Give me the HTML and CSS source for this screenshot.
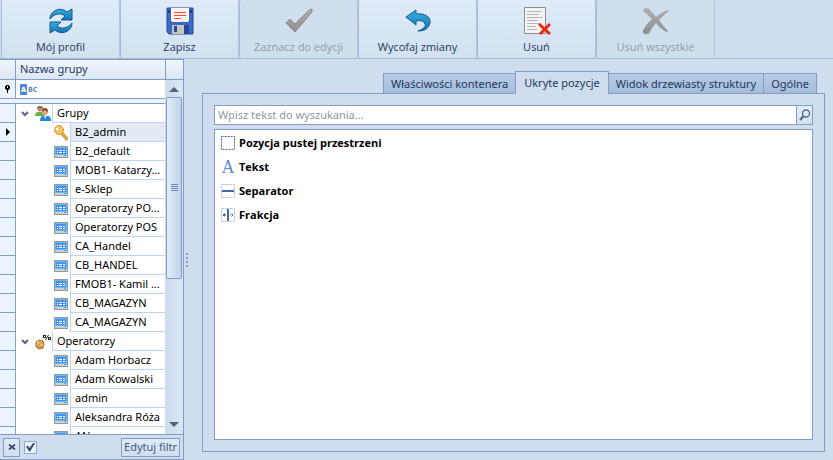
FILE: index.html
```html
<!DOCTYPE html>
<html lang="pl">
<head>
  <meta charset="UTF-8" />
  <meta name="viewport" content="width=device-width, initial-scale=1.0"/>
  <title>Grupy i operatorzy</title>
  <link rel="stylesheet" href="styles.css">
</head>
<body>
  <svg class="defs" width="0" height="0" aria-hidden="true">
    <defs>
      <linearGradient id="blue" x1="0" y1="0" x2="0" y2="1">
        <stop offset="0" stop-color="#35b4e0"/>
        <stop offset="1" stop-color="#1470b0"/>
      </linearGradient>
      <linearGradient id="gray" x1="0" y1="0" x2="0" y2="1">
        <stop offset="0" stop-color="#b0b0b0"/>
        <stop offset="1" stop-color="#8e8e8e"/>
      </linearGradient>
    </defs>
    <symbol id="card" viewBox="0 0 14 12">
      <rect x="0" y="0" width="14" height="12" fill="#969696"/>
      <rect x="1" y="1" width="12" height="8" fill="#5cc0f8"/>
      <rect x="2" y="2" width="10" height="6" fill="#4c8ff0"/>
      <path d="M3 4.500h1M5 4.500h3M9 4.500h2M3 6.500h1M5 6.500h3M9 6.500h2" stroke="#fff"/>
      <rect x="1" y="9" width="12" height="2" fill="#cfcfcf"/>
      <rect x="10" y="9" width="2" height="1" fill="#2fb4e0"/>
    </symbol>
    <symbol id="arrow" viewBox="0 0 8 6">
      <path d="M1 1l3 3 3-3" fill="none" stroke="#5a6685" stroke-width="2"/>
    </symbol>
  </svg>

  <nav class="toolbar">
    <button class="tool">
      <svg width="28" height="28" viewBox="0 0 28 28">
        <path d="M3 12C3 4 13-1 20 5l5-3v11H14l4-4C13 5 7 7 3 12z" fill="url(#blue)" stroke="#14598c"/>
        <path d="M25 16c0 8-10 13-17 7l-5 3V15h11l-4 4c5 4 11 2 15-3z" fill="url(#blue)" stroke="#14598c"/>
      </svg>
      <span>Mój profil</span>
    </button>
    <button class="tool">
      <svg width="28" height="28" viewBox="0 0 28 28">
        <path d="M1 1h26v26H3l-2-2z" fill="#3a69c4" stroke="#27479c"/>
        <path d="M5 1h18v12q0 2-2 2H7q-2 0-2-2z" fill="#fff5f0"/>
        <path d="M8 5.500h12M8 8.500h12M8 11.500h7" stroke="#ff4b2e"/>
        <path d="M2 3h2v3H2zM24 3h2v3h-2z" fill="#19378c"/>
        <path d="M6 18h12v9H6z" fill="#c4c4b8"/>
        <path d="M18 18h5v9h-5z" fill="#27479c"/>
        <path d="M8 19h3v6H8z" fill="#27479c"/>
      </svg>
      <span>Zapisz</span>
    </button>
    <button class="tool" disabled>
      <svg width="28" height="28" viewBox="0 0 28 28">
        <path d="M1 16l4-4 5 5L24 3l3-1v3L10 25z" fill="url(#gray)" stroke="#8a8a8a"/>
      </svg>
      <span>Zaznacz do edycji</span>
    </button>
    <button class="tool">
      <svg width="28" height="28" viewBox="0 0 28 28">
        <path d="M2 10l10-7v4c9-1 15 3 14 9-1 5-5 8-12 8 6-2 8-5 7-7-1-3-4-4-9-3v4z" fill="url(#blue)" stroke="#14598c"/>
      </svg>
      <span>Wycofaj zmiany</span>
    </button>
    <button class="tool">
      <svg width="28" height="28" viewBox="0 0 28 28">
        <path d="M1.500 .5h21v26h-21z" fill="#f4f4f4" stroke="#8c8c8c"/>
        <path d="M4 4.500h15M4 7.500h12M4 10.500h15M4 13.500h11M4 16.500h13M4 19.500h9M4 22.500h10" stroke="#b5b5b5"/>
        <path d="M16 17l11 10M27 17l-10 10" stroke="#ee2b12" stroke-width="3"/>
      </svg>
      <span>Usuń</span>
    </button>
    <button class="tool" disabled>
      <svg width="28" height="28" viewBox="0 0 28 28">
        <path d="M1 4q0-3 3-3 3 0 4 2l6 7q5-5 12-7l1 1q-5 4-10 9 4 6 9 11l-1 1q-7-3-11-9-4 4-6 9-2 3-5 2-3-1-2-4 3-6 9-11z" fill="url(#gray)"/>
      </svg>
      <span>Usuń wszystkie</span>
    </button>
  </nav>

  <div class="layout">
    <aside class="groups">
      <div class="row head">
        <span class="gutter"></span>
        <span class="title">Nazwa grupy</span>
      </div>
      <div class="body">
        <div class="grid">
          <div class="row filter">
            <span class="gutter">
              <svg width="5" height="8" viewBox="0 0 5 8"><path d="M0 1h5v3H0zM1 0h3v5H1zM2 5h1v3H2z"/><path d="M2 1h1v2H2z" fill="#fff"/></svg>
            </span>
            <label class="abc" for="filter"><b>A</b>BC</label>
            <input type="text" id="filter" aria-label="Nazwa grupy" />
          </div>
          <ul class="tree">
            <li class="row group">
              <span class="gutter"></span>
              <svg class="toggle"><use href="#arrow"/></svg>
              <svg class="icon" viewBox="0 0 16 16">
                <circle cx="5" cy="3" r="2.500" fill="#c98a5e"/>
                <path d="M2 3q0-3 3-3t3 3l-3-2z" fill="#6e4a2c"/>
                <path d="M0 10q0-4 3-4h4q3 0 3 4z" fill="#69b34c"/>
                <circle cx="10" cy="6" r="3" fill="#dfa679"/>
                <path d="M7 6q0-4 3-4t3 4l-3-2z" fill="#6e4a2c"/>
                <path d="M5 15q0-5 3-5h5q3 0 3 5z" fill="#2388d1"/>
                <path d="M9 10h2l-1 3z" fill="#fff"/>
              </svg>
              <span class="name">Grupy</span>
            </li>
            <li class="row selected">
              <span class="gutter"><svg width="4" height="8" viewBox="0 0 4 8"><path d="M0 0l4 4-4 4z"/></svg></span>
              <svg class="icon" viewBox="0 0 16 16">
                <path d="M7 8l2-2 6 7-1 2h-2v-2l-2-1z" fill="#e3a43c" stroke="#b87b25" stroke-width=".5"/>
                <circle cx="6" cy="5" r="4.500" fill="#f3c562" stroke="#d39a3a"/>
                <circle cx="4" cy="4" r="1.300" fill="#fff"/>
              </svg>
              <span class="name">B2_admin</span>
            </li>
            <li class="row"><span class="gutter"></span><svg class="icon card"><use href="#card"/></svg><span class="name">B2_default</span></li>
            <li class="row"><span class="gutter"></span><svg class="icon card"><use href="#card"/></svg><span class="name">MOB1- Katarzy...</span></li>
            <li class="row"><span class="gutter"></span><svg class="icon card"><use href="#card"/></svg><span class="name">e-Sklep</span></li>
            <li class="row"><span class="gutter"></span><svg class="icon card"><use href="#card"/></svg><span class="name">Operatorzy PO...</span></li>
            <li class="row"><span class="gutter"></span><svg class="icon card"><use href="#card"/></svg><span class="name">Operatorzy POS</span></li>
            <li class="row"><span class="gutter"></span><svg class="icon card"><use href="#card"/></svg><span class="name">CA_Handel</span></li>
            <li class="row"><span class="gutter"></span><svg class="icon card"><use href="#card"/></svg><span class="name">CB_HANDEL</span></li>
            <li class="row"><span class="gutter"></span><svg class="icon card"><use href="#card"/></svg><span class="name">FMOB1- Kamil ...</span></li>
            <li class="row"><span class="gutter"></span><svg class="icon card"><use href="#card"/></svg><span class="name">CB_MAGAZYN</span></li>
            <li class="row"><span class="gutter"></span><svg class="icon card"><use href="#card"/></svg><span class="name">CA_MAGAZYN</span></li>
            <li class="row group">
              <span class="gutter"></span>
              <svg class="toggle"><use href="#arrow"/></svg>
              <svg class="icon" viewBox="0 0 16 16">
                <path d="M1 8l3-2 4 1 1 3-1 4-4 1-3-2z" fill="#d49a4c" stroke="#a8702c"/>
                <path d="M2 8h4M5 11h3M2 10h2" stroke="#f8dc9c"/>
                <path d="M13.500 1l-3 5" stroke="#222"/>
                <path d="M8 1h3v3H8zM13 3h3v3h-3z" fill="#222"/>
                <path d="M9 2h1v1H9zM14 4h1v1h-1z" fill="#fff"/>
              </svg>
              <span class="name">Operatorzy</span>
            </li>
            <li class="row"><span class="gutter"></span><svg class="icon card"><use href="#card"/></svg><span class="name">Adam Horbacz</span></li>
            <li class="row"><span class="gutter"></span><svg class="icon card"><use href="#card"/></svg><span class="name">Adam Kowalski</span></li>
            <li class="row"><span class="gutter"></span><svg class="icon card"><use href="#card"/></svg><span class="name">admin</span></li>
            <li class="row"><span class="gutter"></span><svg class="icon card"><use href="#card"/></svg><span class="name">Aleksandra Róża</span></li>
            <li class="row"><span class="gutter"></span><svg class="icon card"><use href="#card"/></svg><span class="name">AN</span></li>
          </ul>
        </div>
        <div class="scrollbar">
          <svg width="10" height="5" viewBox="0 0 10 5"><path d="M0 5l5-5 5 5z" fill="#4f5f86"/></svg>
          <div class="thumb"><i></i><i></i><i></i><i></i></div>
          <div class="track"></div>
          <svg width="10" height="5" viewBox="0 0 10 5"><path d="M0 0l5 5 5-5z" fill="#4f5f86"/></svg>
        </div>
      </div>
      <div class="filterbar">
        <button class="small close" aria-label="Zamknij filtr">
          <svg width="8" height="6" viewBox="0 0 8 6"><path d="M1 .5l6 5M7 .5l-6 5" stroke="#3d4c70" stroke-width="1.800"/></svg>
        </button>
        <input type="checkbox" aria-label="Filtr aktywny" checked />
        <button class="small edit">Edytuj filtr</button>
      </div>
    </aside>

    <div class="splitter"><i></i><i></i><i></i><i></i></div>

    <main>
      <div class="tabs">
        <button class="tab">Właściwości kontenera</button>
        <button class="tab active">Ukryte pozycje</button>
        <button class="tab">Widok drzewiasty struktury</button>
        <button class="tab">Ogólne</button>
      </div>
      <div class="panel">
        <div class="search">
          <input type="text" placeholder="Wpisz tekst do wyszukania..." aria-label="Wyszukaj" />
          <button aria-label="Szukaj">
            <svg width="12" height="12" viewBox="0 0 12 12"><circle cx="7" cy="4.500" r="3.500" fill="none" stroke="#56658c" stroke-width="1.300"/><path d="M4.500 7L1 11" stroke="#56658c" stroke-width="2"/></svg>
          </button>
        </div>
        <ul class="items">
          <li>
            <svg width="14" height="14" viewBox="0 0 14 14"><rect x=".5" y=".5" width="13" height="13" fill="none" stroke="#4a69a8" stroke-dasharray="2 1"/></svg>
            Pozycja pustej przestrzeni
          </li>
          <li><span class="letter">A</span>Tekst</li>
          <li>
            <svg width="14" height="14" viewBox="0 0 14 14"><rect x=".5" y=".5" width="13" height="13" fill="none" stroke="#b4c2dc" stroke-dasharray="3 1"/><path d="M1 7h12" stroke="#4a69a8" stroke-width="2"/></svg>
            Separator
          </li>
          <li>
            <svg width="14" height="14" viewBox="0 0 14 14"><rect x=".5" y=".5" width="13" height="13" fill="none" stroke="#b4c2dc" stroke-dasharray="3 1"/><path d="M7 1v12" stroke="#4a69a8" stroke-width="2"/><path d="M3 5l2 2-2 2zM2 6h2v2H2zM11 5L9 7l2 2zM10 6h2v2h-2z" fill="#4a69a8"/></svg>
            Frakcja
          </li>
        </ul>
      </div>
    </main>
  </div>
</body>
</html>
```

FILE: styles.css
```css
* {
  box-sizing: border-box;
}

body {
  margin: 0;
  height: 100vh;
  display: flex;
  flex-direction: column;
  background-color: #d0ddee;
  color: #000;
  font-family: "Noto Sans", "Open Sans", sans-serif;
  font-size: 11px;
  line-height: 16px;
  overflow: hidden;
}

button, input {
  font: inherit;
  color: inherit;
  margin: 0;
  padding: 0;
  border: none;
}

svg {
  flex: none;
}

ul {
  list-style: none;
  margin: 0;
  padding: 0;
}

.defs {
  position: absolute;
}

/* Toolbar */
.toolbar {
  display: flex;
  flex: none;
  height: 59px;
  padding-left: 1px;
  border-bottom: 1px solid #a9bad6;
}

.tool {
  width: 119px;
  padding-top: 7px;
  display: flex;
  flex-direction: column;
  align-items: center;
  gap: 4px;
  background: linear-gradient(#dfebf8, #d2e0f0);
  border-left: 1px solid #a9bad6;
  border-right: 1px solid #b4c3dd;
  border-radius: 2px;
  font-family: "Open Sans", "Noto Sans", sans-serif;
  font-size: 11px;
  color: #1e395b;
}

.tool:disabled {
  background: #d0dfee;
  color: #8d9aac;
}

.layout {
  flex: 1;
  min-height: 0;
  display: flex;
}

/* Group tree */
.groups {
  width: 184px;
  display: flex;
  flex-direction: column;
  border: 1px solid #849dc2;
  border-left: none;
}

.row {
  display: flex;
  align-items: center;
  height: 19px;
}

.gutter {
  flex: none;
  width: 16px;
  align-self: stretch;
  display: flex;
  align-items: center;
  justify-content: center;
  background: #ebf3fd;
  border-right: 1px solid #849dc2;
  border-bottom: 1px solid #849dc2;
}

.head {
  flex: none;
  height: 20px;
  background: linear-gradient(#f0f6fd, #dce7f5);
  border-bottom: 1px solid #849dc2;
  color: #1e395b;
}

.head .gutter {
  background: none;
  border-bottom: none;
}

.head .title {
  flex: 1;
  align-self: stretch;
  margin-right: 17px;
  padding: 1px 4px;
  border-right: 1px solid #849dc2;
}

.body {
  flex: 1;
  min-height: 0;
  display: flex;
}

.grid {
  flex: 1;
  min-width: 0;
  overflow: hidden;
  background: #fff;
}

.filter {
  border-bottom: 1px solid #849dc2;
}

.filter .gutter {
  border-bottom: none;
}

.filter input {
  flex: 1;
  min-width: 0;
  outline: none;
}

.abc {
  display: flex;
  align-items: center;
  gap: 1px;
  margin-left: 4px;
  color: #5a7cb8;
  font-size: 7px;
  font-weight: bold;
  line-height: 11px;
}

.abc b {
  width: 7px;
  border-radius: 1px;
  background: #5083d8;
  color: #fff;
  text-align: center;
}

.tree {
  border-top: 1px solid #849dc2;
  box-shadow: 0 -4px #ebf3fd;
  margin-top: 4px;
}

.icon {
  width: 16px;
  height: 16px;
  margin: 0 1px 0 37px;
}

.icon.card {
  width: 14px;
  height: 12px;
  margin: 0 2px 0 38px;
}

.toggle {
  width: 8px;
  height: 6px;
  margin-left: 5px;
}

.group .icon {
  margin-left: 6px;
}

.name {
  flex: 1;
  min-width: 0;
  align-self: stretch;
  padding: 1px 0 0 4px;
  border-left: 1px solid #bdd3f7;
  border-bottom: 1px solid #bdd3f7;
  white-space: nowrap;
}

.selected .name {
  background: #e2ebf5;
}

.scrollbar {
  width: 18px;
  padding: 7px 1px;
  display: flex;
  flex-direction: column;
  align-items: center;
  background: linear-gradient(90deg, #cddaec, #dbe6f5);
}

.thumb {
  flex: 181;
  align-self: stretch;
  margin-top: 5px;
  display: flex;
  flex-direction: column;
  align-items: center;
  justify-content: center;
  gap: 1px;
  background: linear-gradient(90deg, #e2ecf8, #c0d2e9);
  border: 1px solid #849dc2;
  border-radius: 2px;
}

.thumb i {
  width: 7px;
  height: 1px;
  background: #6f8bb8;
}

.track {
  flex: 144;
}

.filterbar {
  flex: none;
  display: flex;
  align-items: center;
  gap: 4px;
  height: 25px;
  padding: 0 3px;
  border-top: 1px solid #849dc2;
}

.small {
  display: flex;
  align-items: center;
  justify-content: center;
  height: 19px;
  background: linear-gradient(#dfeaf7, #d0deef);
  border: 1px solid #849dc2;
  color: #44597f;
}

.close {
  width: 17px;
}

.edit {
  margin-left: auto;
  padding: 0 2px;
}

.filterbar input {
  appearance: none;
  width: 13px;
  height: 13px;
  display: grid;
  place-items: center;
  background: #edf3fb;
  border: 1px solid #94a9ca;
}

.filterbar input:checked::after {
  content: "";
  width: 9px;
  height: 9px;
  background: #35496f;
  clip-path: polygon(0 45%, 20% 35%, 40% 62%, 82% 0, 100% 8%, 45% 100%, 35% 100%);
}

.splitter {
  width: 6px;
  display: flex;
  flex-direction: column;
  align-items: center;
  justify-content: center;
  gap: 2px;
}

.splitter i {
  width: 2px;
  height: 2px;
  background: #849dc2;
}

/* Right side */
main {
  flex: 1;
  min-width: 0;
  display: flex;
  flex-direction: column;
  padding: 12px 8px 8px 12px;
}

.tabs {
  display: flex;
  align-items: flex-end;
  justify-content: flex-end;
  padding-right: 8px;
}

.tab {
  height: 20px;
  padding: 0 7px;
  margin-left: -1px;
  background: linear-gradient(#b6cbe5, #a5bcdb);
  border: 1px solid #849dc2;
  border-bottom: none;
  color: #1e395b;
  white-space: nowrap;
}

.tab.active {
  height: 23px;
  margin-bottom: -1px;
  padding: 0 8px;
  background: #d0ddee;
  z-index: 1;
}

.panel {
  flex: 1;
  min-height: 0;
  display: flex;
  flex-direction: column;
  gap: 4px;
  padding: 11px;
  border: 1px solid #849dc2;
}

.search {
  flex: none;
  display: flex;
  height: 20px;
  background: #fff;
  border: 1px solid #849dc2;
}

.search input {
  flex: 1;
  min-width: 0;
  padding: 0 3px;
  outline: none;
}

.search input::placeholder {
  color: #8d97a6;
}

.search button {
  width: 16px;
  display: flex;
  align-items: center;
  justify-content: center;
  background: linear-gradient(#e3edf9, #d3e0f1);
  border-left: 1px solid #849dc2;
}

.items {
  flex: 1;
  padding-top: 1px;
  background: #fff;
  border: 1px solid #849dc2;
}

.items li {
  display: flex;
  align-items: center;
  gap: 4px;
  height: 24px;
  padding-left: 6px;
  font-family: "Open Sans", "Noto Sans", sans-serif;
  font-weight: 700;
}

.letter {
  width: 14px;
  color: #5c8ad0;
  font-family: "Liberation Serif", serif;
  font-size: 18px;
  font-weight: normal;
  text-align: center;
}
```
